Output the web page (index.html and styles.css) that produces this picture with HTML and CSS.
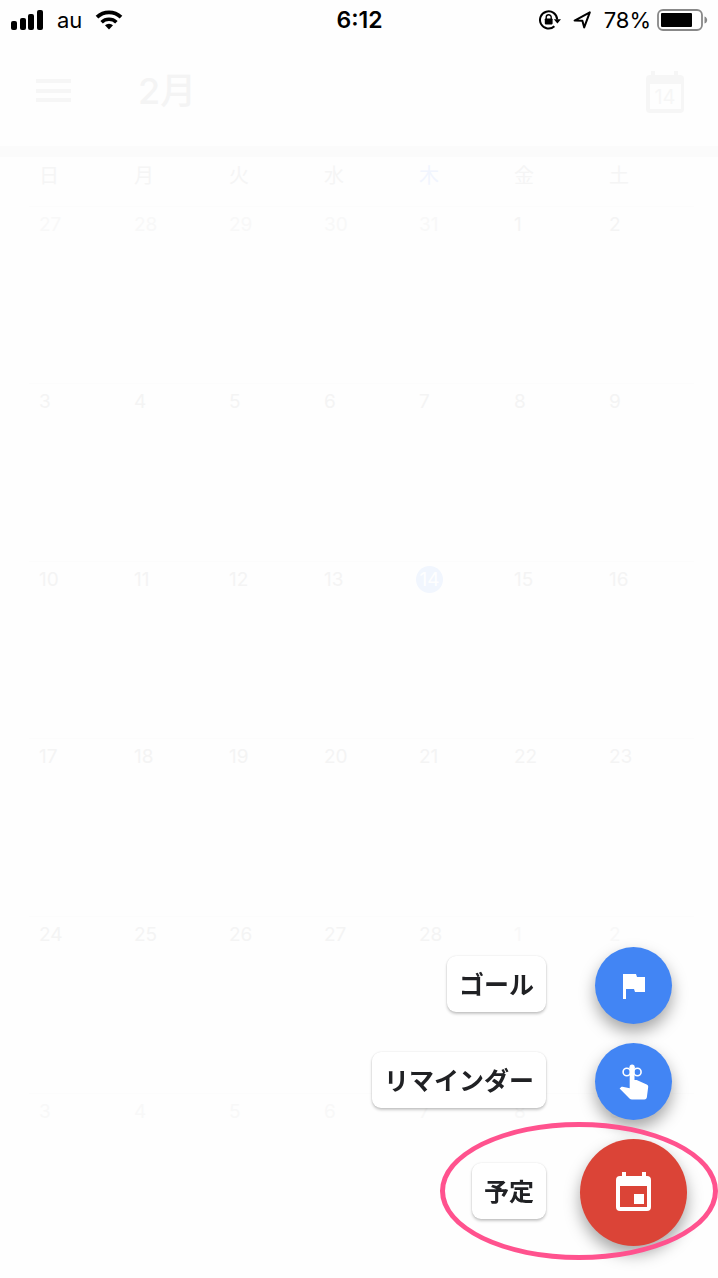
FILE: index.html
```
<!DOCTYPE html>
<html lang="ja">
<head>
    <meta charset="UTF-8">
    <meta name="viewport" content="width=device-width, initial-scale=1">
    <title>カレンダー</title>
    <link rel="stylesheet" href="styles.css">
</head>
<body>
    <div class="status-bar">
        <div class="status-left">
            <svg class="signal" width="33" height="20" viewBox="0 0 33 20">
                <rect x="0" y="11" width="6" height="9" rx="2"/>
                <rect x="9" y="8" width="6" height="12" rx="2"/>
                <rect x="17" y="4" width="6" height="16" rx="2"/>
                <rect x="26" y="0" width="6" height="20" rx="2"/>
            </svg>
            <span>au</span>
            <svg width="28" height="20" viewBox="0 0 28 20">
                <path d="M2 7.2a17.4 17.4 0 0 1 24 0" fill="none" stroke="#000" stroke-width="3.8"/>
                <path d="M6.6 12.2a10.8 10.8 0 0 1 14.8 0" fill="none" stroke="#000" stroke-width="3.6"/>
                <path d="M14 19.5l-4-4.2a5.8 5.8 0 0 1 8 0z"/>
            </svg>
        </div>
        <div class="time">6:12</div>
        <div class="status-right">
            <svg class="lock" width="22" height="20" viewBox="0 0 22 20">
                <path d="M18.2 9.5a8.6 8.6 0 1 0-2.8 6.800" fill="none" stroke="#000" stroke-width="2"/>
                <path d="M14.8 9.2h7.2l-3.6 4.2z"/>
                <rect x="5.8" y="8.4" width="7.8" height="6" rx="0.8"/>
                <path d="M7.2 9V7.2a2.5 2.5 0 0 1 5 0V9" fill="none" stroke="#000" stroke-width="1.4"/>
            </svg>
            <svg class="location" width="19" height="18" viewBox="0 0 19 18">
                <path d="M1.6 9.6L16.8 1.4 11.2 16.4 9.4 9.800z" fill="none" stroke="#000" stroke-width="2" stroke-linejoin="round"/>
            </svg>
            <span>78%</span>
            <svg class="battery" width="51" height="22" viewBox="0 0 51 22">
                <rect x="1" y="1" width="44" height="20" rx="5" fill="none" stroke="#888" stroke-width="1.8"/>
                <rect x="4" y="4" width="31" height="14" rx="1"/>
                <path d="M47.5 7.5c3.6 1 3.6 6 0 7z" fill="#888"/>
            </svg>
        </div>
    </div>

    <header>
        <button class="icon-button" aria-label="メニュー">
            <svg width="35" height="24" viewBox="0 0 35 24" fill="#f6f6f6">
                <rect y="0" width="35" height="4"/>
                <rect y="10" width="35" height="4"/>
                <rect y="19" width="35" height="4"/>
            </svg>
        </button>
        <h1>2月</h1>
        <button class="icon-button today-button" aria-label="今日">
            <svg width="40" height="43" viewBox="0 0 40 43" fill="#f6f6f6">
                <path fill-rule="evenodd" d="M6 1h4v4h19V1h4v4h2a4 4 0 0 1 4 4v30a4 4 0 0 1-4 4H5a4 4 0 0 1-4-4V9a4 4 0 0 1 4-4h1zM5 14v25h31V14z"/>
            </svg>
            <span class="today-number">14</span>
        </button>
    </header>

    <main>
        <table class="calendar">
            <thead>
                <tr>
                    <th>日</th><th>月</th><th>火</th><th>水</th><th class="thursday">木</th><th>金</th><th>土</th>
                </tr>
            </thead>
            <tbody>
                <tr>
                    <td class="other">27</td><td class="other">28</td><td class="other">29</td><td class="other">30</td><td class="other">31</td><td>1</td><td>2</td>
                </tr>
                <tr>
                    <td>3</td><td>4</td><td>5</td><td>6</td><td>7</td><td>8</td><td>9</td>
                </tr>
                <tr>
                    <td>10</td><td>11</td><td>12</td><td>13</td><td><span class="today">14</span></td><td>15</td><td>16</td>
                </tr>
                <tr>
                    <td>17</td><td>18</td><td>19</td><td>20</td><td>21</td><td>22</td><td>23</td>
                </tr>
                <tr>
                    <td>24</td><td>25</td><td>26</td><td>27</td><td>28</td><td class="other">1</td><td class="other">2</td>
                </tr>
                <tr>
                    <td class="other">3</td><td class="other">4</td><td class="other">5</td><td class="other">6</td><td class="other">7</td><td class="other">8</td><td class="other">9</td>
                </tr>
            </tbody>
        </table>
    </main>

    <div class="actions">
        <button class="action">
            <span class="action-label">ゴール</span>
            <span class="fab-slot">
                <span class="fab">
                    <svg width="24" height="26" viewBox="0 0 24 26" fill="#fff">
                        <path d="M1 1h13l1 3h8v15H13l-1-3H4v10H1z"/>
                    </svg>
                </span>
            </span>
        </button>
        <button class="action">
            <span class="action-label">リマインダー</span>
            <span class="fab-slot">
                <span class="fab">
                    <svg width="30" height="36" viewBox="0 0 30 36" fill="#fff">
                        <circle cx="7.8" cy="8" r="3.7" fill="none" stroke="#fff" stroke-width="1.6"/>
                        <circle cx="18.4" cy="8" r="3.7" fill="none" stroke="#fff" stroke-width="1.6"/>
                        <circle cx="13.1" cy="3.2" r="2.6"/>
                        <path d="M10.7 3h4.8v13h2.2l10 4.4c1.2.6 1.6 1.4 1.5 2.5l-1.3 10c-.2 1.6-1 2.5-2.5 2.5H13c-1 0-1.8-.3-2.5-1L.6 24.6 2 23.2c.5-.4 1-.5 1.6-.4l7.1 1.5z"/>
                    </svg>
                </span>
            </span>
        </button>
        <button class="action">
            <span class="action-label">予定</span>
            <span class="fab-slot">
                <span class="fab fab-main">
                    <svg width="36" height="42" viewBox="0 0 36 42" fill="#fff">
                        <path fill-rule="evenodd" d="M6 0h4v4h16V0h4v4h1a4 4 0 0 1 4 4v27a4 4 0 0 1-4 4H4a4 4 0 0 1-4-4V8a4 4 0 0 1 4-4h2zM4 14v21h27V14z"/>
                        <rect x="18" y="22" width="10" height="10"/>
                    </svg>
                </span>
            </span>
        </button>
        <div class="highlight"></div>
    </div>
</body>
</html>
```
FILE: styles.css
```
* { box-sizing: border-box; }
body { margin: 0; background: #fefefe; color: #000; font-family: Inter, "Noto Sans CJK JP", sans-serif; }
button { padding: 0; background: none; border: none; font-family: inherit; cursor: pointer; }
svg { display: block; }

.status-bar { display: grid; grid-template-columns: 1fr auto 1fr; align-items: center; height: 40px; padding: 0 10px 0 11px; font-size: 22px; }
.status-left, .status-right { display: flex; align-items: center; }
.status-left { gap: 13px; }
.status-right { justify-content: flex-end; gap: 6px; }
.location { margin: 0 6px; }
.time { font-size: 23px; font-weight: 600; }

header { display: flex; align-items: center; height: 106px; padding: 0 33px 4px 36px; }
header h1 { flex: 1; margin: 0 0 0 67px; font-size: 36px; line-height: 48px; font-weight: 500; color: #f4f4f4; }
.today-button { position: relative; }
.today-number { position: absolute; left: 0; right: 0; top: 15px; font-size: 20px; line-height: 24px; color: #f6f6f6; }

main { padding: 0 24px 0 29px; border-top: 11px solid #fbfbfb; }
.calendar { width: 100%; table-layout: fixed; border-spacing: 0; }
th { height: 49px; padding: 5px 0 0 10px; text-align: left; vertical-align: top; font-size: 20px; line-height: 28px; font-weight: 400; color: #f5f5f5; }
.thursday { color: #f1f5fe; }
td { height: 177px; padding: 6px 0 0 10px; border-top: 1px solid #fcfcfc; vertical-align: top; font-size: 19px; line-height: 24px; color: #f4f4f4; }
tr:nth-child(even) td { height: 178px; }
td.other { color: #f8f8f8; }
.today { display: inline-block; width: 27px; height: 27px; margin: -2px 0 0 -3px; border-radius: 50%; background: #f1f6fe; color: #fefefe; line-height: 27px; text-align: center; }

.actions { position: fixed; right: 31px; bottom: 32px; display: flex; flex-direction: column; align-items: flex-end; gap: 19px; }
.action { display: flex; align-items: center; gap: 34px; color: #202124; }
.action-label { height: 56px; margin-bottom: 3px; padding: 0 12px; border-radius: 9px; background: #fff; box-shadow: 0 2px 3px rgba(0, 0, 0, 0.22), 0 0 2px rgba(0, 0, 0, 0.12); font-size: 25px; line-height: 58px; font-weight: 600; }
.fab-slot { display: flex; justify-content: center; width: 107px; }
.fab { display: flex; align-items: center; justify-content: center; width: 77px; height: 77px; border-radius: 50%; background: #4285f4; box-shadow: 0 8px 16px rgba(0, 0, 0, 0.35); }
.fab-main { width: 107px; height: 107px; background: #db4437; }
/* ring around the "予定" action */
.highlight { position: absolute; right: -31px; bottom: -14px; width: 278px; height: 138px; border: 5px solid #ff528e; border-radius: 50%; pointer-events: none; }
```
